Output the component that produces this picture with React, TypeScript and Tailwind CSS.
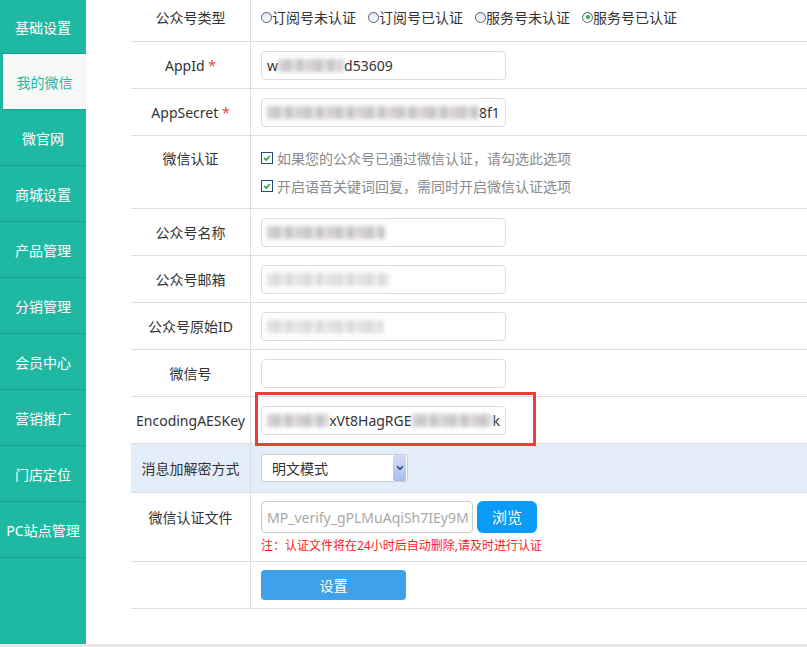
import React from 'react';

const menu = ['基础设置', '我的微信', '微官网', '商城设置', '产品管理', '分销管理', '会员中心', '营销推广', '门店定位', 'PC站点管理'];

const Blur: React.FC<{ w: number; light?: boolean }> = ({ w, light }) => (
  <span
    className={`inline-block h-[13px] align-middle blur-[2px] ${light ? 'opacity-50' : 'opacity-80'}`}
    style={{
      width: w,
      backgroundImage:
        'repeating-linear-gradient(90deg, #c9c2c6 0 7px, #b8b4b9 7px 13px, #d8d6d8 13px 19px, #aeb0b8 19px 24px, #d4ced0 24px 31px)',
    }}
  />
);

const Input: React.FC<{ children?: React.ReactNode }> = ({ children }) => (
  <div className="w-[245px] h-[29px] border border-[#dcdcdc] rounded-[4px] flex items-center px-[5px] overflow-hidden whitespace-nowrap text-[14px] text-[#333]">
    {children}
  </div>
);

const Radio: React.FC<{ checked?: boolean; label: string }> = ({ checked, label }) => (
  <label className="flex items-center">
    <span className="w-[11px] h-[11px] rounded-full border border-[#4a5f7c] bg-gradient-to-b from-[#e6e9ee] to-white flex items-center justify-center">
      {checked && <span className="w-[4px] h-[4px] rounded-full bg-[#22b13a]" />}
    </span>
    <span className="text-[14px] text-[#333]">{label}</span>
  </label>
);

const Check: React.FC<{ label: string }> = ({ label }) => (
  <div className="h-[28px] flex items-center gap-[4px]">
    <span className="w-[12px] h-[12px] border border-[#1f4e7c] bg-white flex items-center justify-center">
      <svg viewBox="0 0 10 10" className="w-[8px] h-[8px]">
        <path d="M1.5 5.2 L4 7.6 L8.6 2.4" fill="none" stroke="#20a52e" strokeWidth="2" />
      </svg>
    </span>
    <span className="text-[14px] text-[#8a8a8a]">{label}</span>
  </div>
);

const Row: React.FC<{
  label?: React.ReactNode;
  h?: string;
  top?: boolean;
  blue?: boolean;
  children?: React.ReactNode;
}> = ({ label, h = 'h-[46px]', top, blue, children }) => (
  <div className={`flex border-b border-[#dddddd] ${blue ? 'bg-[#e3eefa]' : ''}`}>
    <div
      className={`w-[120px] shrink-0 border-r border-[#dddddd] flex justify-center text-[14px] text-[#333] ${
        top ? 'items-start' : 'items-center'
      } ${h}`}
    >
      {label}
    </div>
    <div className={`flex-1 pl-[10px] relative ${h} ${top ? '' : 'flex items-center'}`}>{children}</div>
  </div>
);

export default function App() {
  return (
    <div
      className="w-[807px] h-[647px] overflow-hidden bg-white flex flex-col"
      style={{ fontFamily: '"Noto Sans", "Noto Sans CJK SC", sans-serif' }}
    >
      <div className="flex flex-1 min-h-0">
        <aside className="w-[86px] shrink-0 bg-[#1fb9a3] flex flex-col">
          {menu.map((m, i) => (
            <div
              key={m}
              className={`${i === 0 ? 'h-[54px]' : 'h-[56px]'} shrink-0 border-b border-[#17a38f] flex items-center justify-center pt-[2px] text-[14px] ${
                i === 1 ? 'ml-[3px] bg-[#f5f8f7] text-[#1fb9a3]' : 'text-white'
              }`}
            >
              {m}
            </div>
          ))}
        </aside>

        <main className="flex-1 pl-[45px]">
          <div className="-mt-[5px]">
            <Row label={<span className="mt-[-2px]">公众号类型</span>}>
              <div className="flex items-center gap-[12px] -mt-[2px]">
                <Radio label="订阅号未认证" />
                <Radio label="订阅号已认证" />
                <Radio label="服务号未认证" />
                <Radio checked label="服务号已认证" />
              </div>
            </Row>
            <Row
              label={
                <span>
                  AppId <span className="text-[#f04848]">*</span>
                </span>
              }
            >
              <Input>
                <span>w</span>
                <Blur w={66} />
                <span>d53609</span>
              </Input>
            </Row>
            <Row
              label={
                <span>
                  AppSecret <span className="text-[#f04848]">*</span>
                </span>
              }
            >
              <Input>
                <Blur w={212} />
                <span>8f1</span>
              </Input>
            </Row>
            <Row label={<span className="mt-[8px] h-[28px] flex items-center">微信认证</span>} h="h-[72px]" top>
              <div className="pt-[8px] flex flex-col">
                <Check label="如果您的公众号已通过微信认证，请勾选此选项" />
                <Check label="开启语音关键词回复，需同时开启微信认证选项" />
              </div>
            </Row>
            <Row label="公众号名称">
              <Input>
                <Blur w={118} />
              </Input>
            </Row>
            <Row label="公众号邮箱">
              <Input>
                <Blur w={122} light />
              </Input>
            </Row>
            <Row label="公众号原始ID">
              <Input>
                <Blur w={116} light />
              </Input>
            </Row>
            <Row label="微信号">
              <Input />
            </Row>
            <Row label="EncodingAESKey">
              <Input>
                <Blur w={66} />
                <span>xVt8HagRGE</span>
                <Blur w={86} />
                <span>k</span>
              </Input>
              <div className="absolute left-[4px] -top-[5px] w-[281px] h-[54px] border-[3px] border-[#f23b3b] pointer-events-none" />
            </Row>
            <Row label="消息加解密方式" h="h-[48px]" blue>
              <div className="w-[147px] h-[28px] border border-[#cfcfcf] rounded-[3px] bg-white flex items-center justify-between pl-[10px] pr-[1px]">
                <span className="text-[14px] text-[#333]">明文模式</span>
                <span className="w-[13px] h-[26px] bg-gradient-to-b from-[#d3ddf8] to-[#a9bcf0] flex items-center justify-center rounded-[2px]">
                  <svg viewBox="0 0 10 10" className="w-[8px] h-[8px]">
                    <path d="M1.5 3 L5 6.5 L8.5 3" fill="none" stroke="#34435e" strokeWidth="2" />
                  </svg>
                </span>
              </div>
            </Row>
            <Row label={<span className="mt-[9px] h-[31px] flex items-center">微信认证文件</span>} h="h-[68px]" top>
              <div className="pt-[8px]">
                <div className="flex items-center gap-[4px]">
                  <div className="w-[212px] h-[32px] border border-[#cccccc] rounded-[4px] flex items-center px-[5px] overflow-hidden whitespace-nowrap text-[14px] text-[#a8a8a8]">
                    MP_verify_gPLMuAqiSh7IEy9M
                  </div>
                  <button className="w-[60px] h-[32px] rounded-[6px] bg-[#0b9af6] text-white text-[15px]">浏览</button>
                </div>
                <div className="mt-[4px] text-[12px] leading-[18px] text-[#ff1a1a]">注：认证文件将在24小时后自动删除,请及时进行认证</div>
              </div>
            </Row>
            <Row>
              <button className="w-[145px] h-[30px] rounded-[4px] bg-[#3fa1e9] text-white text-[14px]">设置</button>
            </Row>
          </div>
        </main>
      </div>
      <div className="h-[3px] bg-[#e8e8e8]" />
    </div>
  );
}
